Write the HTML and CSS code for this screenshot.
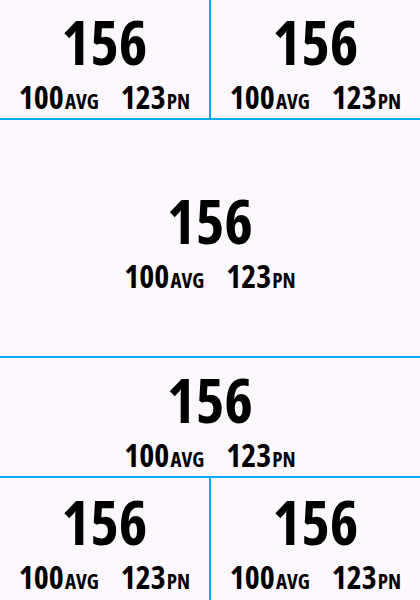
FILE: index.html
```html
<!DOCTYPE html>
<html lang="en">
<head>
  <meta charset="UTF-8">
  <title>Stats grid</title>
  <link rel="stylesheet" href="styles.css">
</head>
<body>
  <div class="grid">
    <div class="cell">
      <div class="big">156</div>
      <div class="sub"><span>100<small>AVG</small></span><span>123<small>PN</small></span></div>
    </div>
    <div class="cell">
      <div class="big">156</div>
      <div class="sub"><span>100<small>AVG</small></span><span>123<small>PN</small></span></div>
    </div>
    <div class="cell wide">
      <div class="big">156</div>
      <div class="sub"><span>100<small>AVG</small></span><span>123<small>PN</small></span></div>
    </div>
    <div class="cell wide">
      <div class="big">156</div>
      <div class="sub"><span>100<small>AVG</small></span><span>123<small>PN</small></span></div>
    </div>
    <div class="cell">
      <div class="big">156</div>
      <div class="sub"><span>100<small>AVG</small></span><span>123<small>PN</small></span></div>
    </div>
    <div class="cell">
      <div class="big">156</div>
      <div class="sub"><span>100<small>AVG</small></span><span>123<small>PN</small></span></div>
    </div>
  </div>
</body>
</html>
```
FILE: styles.css
```css
html, body {
  margin: 0;
  background: #fdf8fd;
}
.grid {
  display: grid;
  grid-template-columns: 209px 209px;
  grid-template-rows: 118px 236px 118px 122px;
  gap: 2px;
  background: #00aaff;
  width: 420px;
  height: 600px;
  overflow: hidden;
  font-family: 'Open Sans', sans-serif;
  font-stretch: condensed;
  font-weight: bold;
  color: #000;
}
.cell {
  background: #fdf8fd;
  display: flex;
  flex-direction: column;
  align-items: center;
  justify-content: center;
  padding-top: 6px;
}
.wide {
  grid-column: span 2;
}
.big {
  font-size: 61px;
  line-height: 1;
}
.sub {
  display: flex;
  gap: 22px;
  font-size: 32px;
  line-height: 1;
  margin-top: 9px;
}
.sub small {
  font-size: 21px;
  margin-left: 1px;
}
```
